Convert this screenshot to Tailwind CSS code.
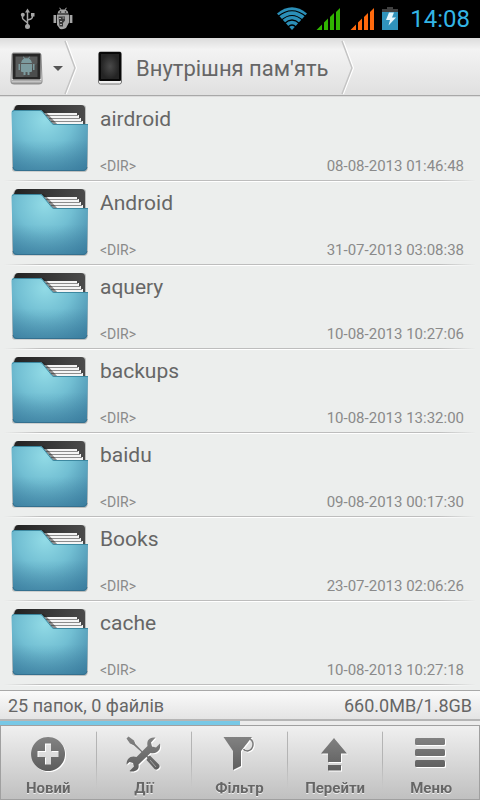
<!DOCTYPE html>
<html lang="uk">
<head>
<meta charset="utf-8">
<meta name="viewport" content="width=device-width, initial-scale=1">
<title>Внутрішня пам'ять</title>
<script src="https://cdn.jsdelivr.net/npm/@tailwindcss/browser@4"></script>
</head>
<body class="flex h-screen flex-col overflow-hidden bg-[#eceeed] font-['Roboto','Noto_Sans',sans-serif] text-[#666666]">

<svg class="absolute h-0 w-0" aria-hidden="true">
  <defs>
    <radialGradient id="front" gradientUnits="userSpaceOnUse" cx="45" cy="22" r="62">
      <stop offset="0" stop-color="#92dbe6"/><stop offset=".45" stop-color="#72bfd3"/><stop offset="1" stop-color="#3f83a5"/>
    </radialGradient>
    <linearGradient id="shade" x1="0" y1="0" x2="0" y2="1"><stop offset=".5" stop-color="#3a7c9c" stop-opacity="0"/><stop offset="1" stop-color="#3a7c9c" stop-opacity=".5"/></linearGradient>
    <linearGradient id="back" x1="0" y1="0" x2="1" y2="0"><stop offset="0" stop-color="#222"/><stop offset="1" stop-color="#4b4b4b"/></linearGradient>
    <linearGradient id="tool" x1="0" y1="0" x2="0" y2="1"><stop offset="0" stop-color="#838383"/><stop offset="1" stop-color="#5c5c5c"/></linearGradient>
    <linearGradient id="toolpx" gradientUnits="userSpaceOnUse" x1="0" y1="0" x2="0" y2="36"><stop offset="0" stop-color="#838383"/><stop offset="1" stop-color="#5c5c5c"/></linearGradient>
    <radialGradient id="screen"><stop offset="0" stop-color="#4a4a4a"/><stop offset="1" stop-color="#242424"/></radialGradient>
    <linearGradient id="metal" x1="0" y1="0" x2="0" y2="1"><stop offset="0" stop-color="#d4d4d4"/><stop offset=".86" stop-color="#efefef"/><stop offset="1" stop-color="#8a8a8a"/></linearGradient>
    <symbol id="folder" viewBox="0 0 90 80">
      <path d="M14 73.500q-2 0-2-3V14l2-5q1-2 3-2h66q3 0 3 3v16h2v43q0 5-4 5z" fill="#000" opacity=".2"/>
      <path d="M14 15v-3l1-3q1-2 3-2h63q4 0 4 4v19H14z" fill="url(#back)"/>
      <path d="M44 15h33v2h2v3h2V23h2v5H50z" fill="#f4f4f4"/>
      <path d="M46 17.500h32M49 20.500h31M50 23.500h32" stroke="#8c8c8c" stroke-width="1"/>
      <path d="M40 12l13 15h5L44 12z" fill="#222" opacity=".5"/>
      <path d="M14 12h26q2 0 3 2l9 11q1 1 2 1h34l-1 42q0 5-4 5H17q-4 0-4-4L11.500 15q0-3 2.500-3z" fill="url(#front)"/>
      <path d="M14 12h26q2 0 3 2l9 11q1 1 2 1h34l-1 42q0 5-4 5H17q-4 0-4-4L11.500 15q0-3 2.500-3z" fill="url(#shade)"/>
      <path d="M12.500 14l1-1.500h26.500q2 0 3 2l9 11q1 1 2 1h34" fill="none" stroke="#3c88a0" stroke-width="1"/>
      <path d="M13 69q0 3.500 4 3.500h66q4 0 4-3.500" fill="none" stroke="#34708f" stroke-width="1"/>
    </symbol>
  </defs>
</svg>

<div class="flex h-[38px] shrink-0 items-center bg-black">
  <svg class="ml-5 h-[38px] w-[60px]" viewBox="0 0 60 38" role="img" aria-label="USB, налагодження">
    <g fill="none" stroke="#a5a5a5" stroke-width="1.500"><path d="M7.500 11v17M2.500 15v3q0 1 1.500 2l3.500 3M12.500 15v1.500q0 1.500-1.500 2.500L7.500 20"/></g>
    <g fill="#a5a5a5"><path d="M7.500 8.500L10 12.500H5z"/><circle cx="7.500" cy="26.500" r="2.500"/><circle cx="2.800" cy="14.800" r="2"/><path d="M11 13h3.500v3.500H11z"/>
    <path d="M37.500 13.500q.5-3 3-3.800l-1.300-1.700.7-.5 1.500 2h3.200l1.500-2 .7.500-1.300 1.700q2.500.8 3 3.800zM37 14.500h12v8l-3 5.500q-2 1.500-6 1L37 25zM33.500 15h2.700v8h-2.700zM49.700 15h2.700v8h-2.700z"/></g>
    <g fill="#151515"><circle cx="40.500" cy="12" r=".8"/><circle cx="45.500" cy="12" r=".8"/><path d="M38.500 16.500h6.500v4l-2 2.500v3.500h-3.500z" opacity=".75"/></g>
    <path d="M39 18.500h2M42.500 18h2M40 21.500h2M40 24.500h2" stroke="#aaa"/>
  </svg>
  <svg class="ml-auto h-[38px] w-32" viewBox="0 0 128 38" role="img" aria-label="Wi-Fi, сигнал, батарея">
    <path d="M6 13.500Q21 1 36 13.500L21 30z" fill="#2b8fb8"/>
    <g fill="none" stroke="#000" stroke-width="1.200"><path d="M7 16.500Q21 5 35 16.500M10.500 20Q21 11 31.500 20M13.500 23.500Q21 16.500 28.500 23.500M17 27Q21 23 25 27"/></g>
    <path d="M45.500 30l5.500-5.500V30zM53 22.500l4-4V30h-4zM59 17l4-4V30h-4zM65 12l4-4V30h-4z" fill="#30b400"/>
    <path d="M79.500 30l5.500-5.500V30zM87 22.500l4-4V30h-4zM93 17l4-4V30h-4zM99 12l4-4V30h-4z" fill="#ff6a0d"/>
    <path d="M111 12V9h5V7h6v2h5v3z" fill="#404040"/><path d="M111 12h16v18h-16z" fill="#3093bb"/>
    <path d="M118 12.500h5l-2 5h4l-7.500 8 1.500-5.500h-4z" fill="#e4f5fb"/>
  </svg>
  <time class="mr-[10px] ml-[9px] w-[62px] text-right text-2xl text-[#33b5e5]">14:08</time>
</div>

<nav class="flex h-[58px] shrink-0 items-stretch border-b border-[#a8a8a8] bg-linear-to-b from-[#dcdcdc] via-[#f3f3f3] via-20% to-[#e0e0e0]" aria-label="Шлях">
  <button class="flex items-center pt-1 pl-2" aria-label="Сховище">
    <svg class="h-9 w-9" viewBox="0 0 36 36">
      <path d="M5 2h26q2 0 2 2l1 25v2q0 2-3 2H6q-3 0-3-2v-2L4 4q0-2 1-2z" fill="url(#metal)" stroke="#8e8e8e"/>
      <path d="M3.500 29.500h30" stroke="#aaa"/>
      <rect x="4.500" y="2.500" width="28" height="26" rx="1" fill="#262626"/><rect x="7.500" y="5.500" width="22" height="20.500" fill="#4b4d4d"/>
      <path d="M29.500 5.500V12L15 26H7.500V5.500z" fill="#fff" opacity=".07"/>
      <g fill="#7c9b9f"><path d="M13 12q.5-3.500 3-4.500l-1-1.500.8-.4 1 1.600h3.400l1-1.600.8.4-1 1.500q2.500 1 3 4.500zM13 13h11v7q0 1-1 1h-1.500v3h-2v-3h-2v3h-2v-3H14q-1 0-1-1zM10.500 13H12v6h-1.500zM25 13h1.500v6H25z"/></g>
    </svg>
    <svg class="ml-2 h-3 w-3" viewBox="0 0 12 12"><path d="M1 3h10L6 8z" fill="#555"/></svg>
  </button>
  <svg class="h-[57px] w-4" viewBox="0 0 16 57"><path d="M2 3l10 27-10 26" fill="none" stroke="#fff" stroke-width="2"/><path d="M1 3l10 27L1 56" fill="none" stroke="#c4c4c4" stroke-width="1.500"/></svg>
  <a href="#" class="flex items-center pt-1 pl-[18px]">
    <svg class="h-9 w-6" viewBox="0 0 24 36">
      <path d="M.5 3q0-2 2-2h19q2 0 2 2v28q0 2-2 2h-19q-2 0-2-2z" fill="#f1f1f1" stroke="#777"/>
      <rect x="1" y="1" width="22" height="29" rx="1" fill="#080808"/><rect x="3" y="3" width="18" height="25" fill="url(#screen)"/>
    </svg>
    <span class="ml-[14px] text-[22px] leading-7">Внутрішня пам'ять</span>
  </a>
  <svg class="ml-3 h-[57px] w-4" viewBox="0 0 16 57"><path d="M2 3l10 27-10 26" fill="none" stroke="#fff" stroke-width="2"/><path d="M1 3l10 27L1 56" fill="none" stroke="#c4c4c4" stroke-width="1.500"/></svg>
</nav>

<main class="min-h-0 flex-1 overflow-hidden border-t border-[#dcdcdc] pt-px">
  <ul id="files"></ul>
</main>

<template id="row">
  <li>
    <a href="#" class="flex h-[82px]">
      <svg class="h-20 w-[90px] shrink-0" aria-hidden="true"><use href="#folder"/></svg>
      <span class="flex flex-1 flex-col justify-between pt-[7px] pr-4 pb-1 pl-[10px]">
        <span data-name class="text-[21px] leading-7"></span>
        <span class="flex justify-between text-[15px] leading-5 text-[#8a8a8a]"><span class="text-sm leading-5">&lt;DIR&gt;</span><time data-date></time></span>
      </span>
    </a>
    <div class="mx-1 h-px bg-[linear-gradient(to_right,transparent,#bdbdbd_8%,#bdbdbd_92%,transparent)]"></div>
    <div class="mx-1 h-px bg-[linear-gradient(to_right,transparent,#ffffff_8%,#ffffff_92%,transparent)]"></div>
  </li>
</template>

<footer class="shrink-0">
  <div class="flex h-[29px] items-center justify-between border-t border-[#a8a8a8] bg-linear-to-b from-[#fafafa] to-[#e4e4e4] px-2 pt-px text-lg leading-6">
    <span>25 папок, 0 файлів</span><span>660.0MB/1.8GB</span>
  </div>
  <div class="h-[6px] border-t-2 border-[#b5b5b5] bg-[#ececec]" role="progressbar" aria-label="Зайнято" aria-valuenow="50" aria-valuemin="0" aria-valuemax="100">
    <div class="h-full bg-[#78c8e6]" style="width:50%"></div>
  </div>
  <div class="grid h-[75px] grid-cols-5 border border-[#a0a0a0] bg-linear-to-b from-[#f0f0f0] to-[#c0c0c0] text-[15px] font-bold">
    <button class="flex flex-col items-center border-r border-transparent pt-[10px] [border-image:linear-gradient(to_bottom,transparent_8%,#b4b4b4_10%,#b4b4b4_50%,transparent_85%)_1]">
      <svg class="h-9 w-9 drop-shadow-[1px_1px_0_#ffffff]" viewBox="0 0 36 36"><path fill-rule="evenodd" d="M18 1a17 17 0 1 0 .1 0zM15 7.500h6V15h7.500v6H21v7.500h-6V21H7.500v-6H15z" fill="url(#tool)"/></svg>
      <span class="mt-[6px] leading-5 drop-shadow-[0_1px_0_#eeeeee]">Новий</span>
    </button>
    <button class="flex flex-col items-center border-r border-transparent pt-[10px] [border-image:linear-gradient(to_bottom,transparent_8%,#b4b4b4_10%,#b4b4b4_50%,transparent_85%)_1]">
      <svg class="h-9 w-9 drop-shadow-[1px_1px_0_#ffffff]" viewBox="0 0 36 36">
        <g fill="url(#toolpx)">
          <path d="M.5 2.500l2-2 5.500 4 1.500 3.500 8 8.500 4.500 4 2-1 9 9q1.500 2-.5 4t-4 .5l-8-9 1-2-4.500-4.500L8 9.500 4 7.500z"/>
          <path d="M29.500 1.500l-4.500 5 1 4 4 1 4-4q1 6-3 8.500-3 2-6.500 1L12.500 28.500q1 5-3.500 6.500-3 1-5.500 0L8 30.500 7 27l-3.500-1-3 2.500Q.5 23 4.500 21q3-1 6 0l11-11q-1-5.500 2.500-7.500 2.500-1.500 5.500-1z"/>
        </g>
        <path d="M24 24l6 7" stroke="#b5b5b5" stroke-width=".8"/>
      </svg>
      <span class="mt-[6px] leading-5 drop-shadow-[0_1px_0_#eeeeee]">Дії</span>
    </button>
    <button class="flex flex-col items-center border-r border-transparent pt-[10px] [border-image:linear-gradient(to_bottom,transparent_8%,#b4b4b4_10%,#b4b4b4_50%,transparent_85%)_1]">
      <svg class="h-9 w-9 drop-shadow-[1px_1px_0_#ffffff]" viewBox="0 0 36 36">
        <path d="M2.500 1H31l-11 14v15l-8 4V15z" fill="url(#toolpx)"/><path d="M29 3q3.500 2 3 6-.5 5-5.500 6-3 0-4-2" fill="none" stroke="url(#toolpx)" stroke-width="1.500"/>
      </svg>
      <span class="mt-[6px] leading-5 drop-shadow-[0_1px_0_#eeeeee]">Фільтр</span>
    </button>
    <button class="flex flex-col items-center border-r border-transparent pt-[10px] [border-image:linear-gradient(to_bottom,transparent_8%,#b4b4b4_10%,#b4b4b4_50%,transparent_85%)_1]">
      <svg class="h-9 w-9 drop-shadow-[1px_1px_0_#ffffff]" viewBox="0 0 36 36"><path d="M17 2l13 15.500h-6V26H11v-8.500H4zM11 29h13v5.500H11z" fill="url(#toolpx)"/></svg>
      <span class="mt-[6px] leading-5 drop-shadow-[0_1px_0_#eeeeee]">Перейти</span>
    </button>
    <button class="flex flex-col items-center pt-[10px]">
      <svg class="h-9 w-9 drop-shadow-[1px_1px_0_#ffffff]" viewBox="0 0 36 36"><g fill="url(#toolpx)"><rect x="2" y="2" width="30" height="7" rx="1.500"/><rect x="2" y="13" width="30" height="7" rx="1.500"/><rect x="2" y="24" width="30" height="7" rx="1.500"/></g></svg>
      <span class="mt-[6px] leading-5 drop-shadow-[0_1px_0_#eeeeee]">Меню</span>
    </button>
  </div>
</footer>

<script>
  const files = [
    ["airdroid", "08-08-2013 01:46:48"],
    ["Android", "31-07-2013 03:08:38"],
    ["aquery", "10-08-2013 10:27:06"],
    ["backups", "10-08-2013 13:32:00"],
    ["baidu", "09-08-2013 00:17:30"],
    ["Books", "23-07-2013 02:06:26"],
    ["cache", "10-08-2013 10:27:18"],
  ];
  const list = document.getElementById("files");
  const row = document.getElementById("row");
  for (const [name, date] of files) {
    const item = row.content.cloneNode(true);
    item.querySelector("[data-name]").textContent = name;
    item.querySelector("[data-date]").textContent = date;
    list.append(item);
  }
</script>
</body>
</html>
